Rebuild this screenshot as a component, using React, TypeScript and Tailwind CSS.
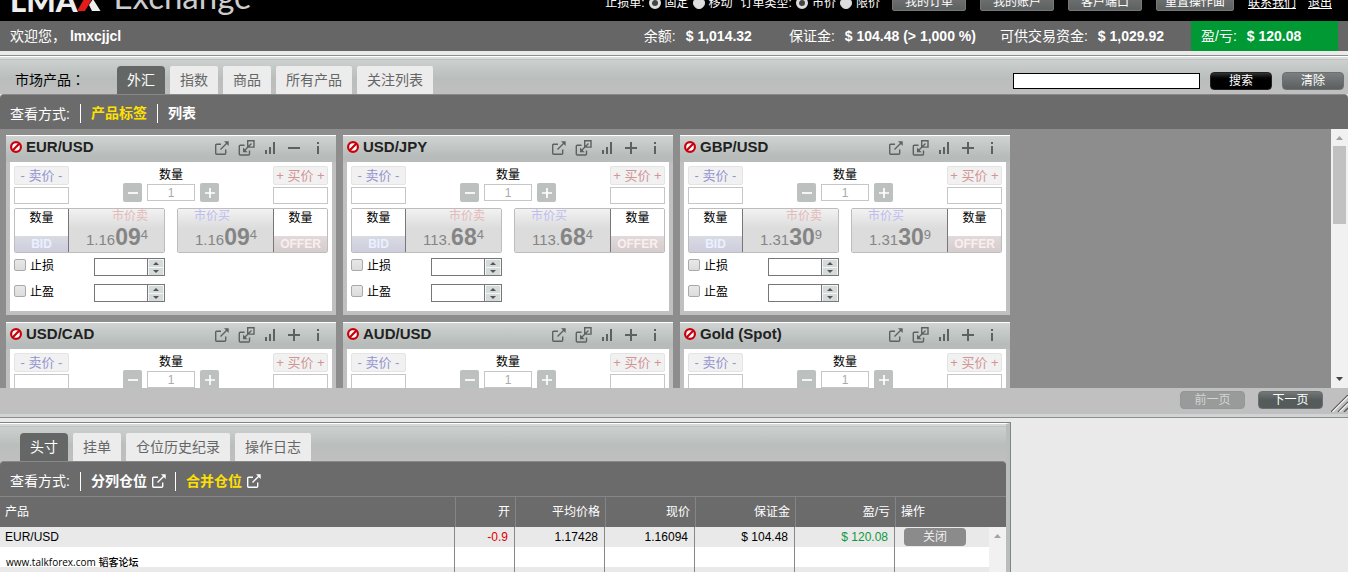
import React from "react";

type Instrument = { name: string; price?: string[]; open?: boolean };

const instruments: Instrument[] = [
  { name: "EUR/USD", price: ["1.16", "09", "4"], open: true },
  { name: "USD/JPY", price: ["113.", "68", "4"] },
  { name: "GBP/USD", price: ["1.31", "30", "9"] },
  { name: "USD/CAD" },
  { name: "AUD/USD" },
  { name: "Gold (Spot)" },
];

function PopOut({ className = "" }: { className?: string }) {
  return (
    <svg viewBox="0 0 14 14" className={`size-3.5 shrink-0 ${className}`} fill="none" stroke="currentColor" strokeWidth="1.4" aria-hidden="true">
      <path d="M6 3.200H1.600a.9.9 0 0 0-.9.9v8.200a.9.9 0 0 0 .9.9h8.200a.9.9 0 0 0 .9-.9V8.500M5.500 8.500l7-7" />
      <path d="M9 .3h4.700V5z" fill="currentColor" stroke="none" />
    </svg>
  );
}

function PopIn() {
  return (
    <svg viewBox="0 0 17 16" className="h-4 w-[17px]" fill="none" stroke="currentColor" strokeWidth="1.4" aria-hidden="true">
      <path d="M6.500 5.200H2.300a1 1 0 0 0-1 1v7.800a1 1 0 0 0 1 1h8.200a1 1 0 0 0 1-1v-3.500" />
      <path d="M9.700 .8h6.300v6.300H9.700zM13.500 3.500L6.500 10.500" />
      <path d="M5 7.500v4.700h4.700z" fill="currentColor" stroke="none" />
    </svg>
  );
}

function Bars() {
  return (
    <svg viewBox="0 0 11 12" className="h-3 w-[11px]" fill="currentColor" aria-hidden="true">
      <path d="M0 8h2v4H0zM4 5h2v7H4zM8 0h2v12H8z" />
    </svg>
  );
}

function Plus({ minus = false, small = false }: { minus?: boolean; small?: boolean }) {
  return (
    <svg viewBox="0 0 12 12" className={small ? "size-2.5" : "size-3"} stroke="currentColor" strokeWidth="2" aria-hidden="true">
      <path d={minus ? "M0 6h12" : "M0 6h12M6 0v12"} />
    </svg>
  );
}

function IconButton({ label, children }: { label: string; children: React.ReactNode }) {
  return (
    <button type="button" aria-label={label} className="flex h-5 w-6 items-center justify-center text-[#5d615f]">
      {children}
    </button>
  );
}

function QuantityCell({ side }: { side: "BID" | "OFFER" }) {
  return (
    <div className="flex w-[53px] flex-col text-center">
      <span className="flex-1 bg-white text-xs leading-[18px]">数量</span>
      <span className={side === "BID"
        ? "h-4 bg-linear-to-b from-[#d9dbe3] to-[#cdcddd] text-xs leading-[17px] font-bold text-[#eaf1ff]"
        : "h-4 bg-linear-to-b from-[#e0dada] to-[#d6cdcd] text-xs leading-[17px] font-bold text-[#fdeeee]"}>
        {side}
      </span>
    </div>
  );
}

function Quote({ price, side }: { price: string[]; side: "BID" | "OFFER" }) {
  const bid = side === "BID";
  return (
    <div className={bid
      ? "flex h-[45px] w-[151px] overflow-hidden rounded-xs border border-[#bdbdbd]"
      : "flex h-[45px] w-[151px] flex-row-reverse overflow-hidden rounded-xs border border-[#bdbdbd]"}>
      <QuantityCell side={side} />
      <button type="button" className={bid
        ? "flex flex-1 flex-col border-l border-[#777] bg-linear-to-b from-[#f2f2f2] to-[#dcdcdc] to-45% text-left"
        : "flex flex-1 flex-col border-r border-[#777] bg-linear-to-b from-[#f2f2f2] to-[#dcdcdc] to-45% text-left"}>
        <span className={bid
          ? "w-full pr-4 text-right text-xs leading-[14px] text-[#e3b9b9]"
          : "w-full pl-4 text-xs leading-[14px] text-[#bcbcf0]"}>
          {bid ? "市价卖" : "市价买"}
        </span>
        <span className="flex h-7 w-full items-baseline pl-[17px] leading-7 text-[#858585]">
          <span className="text-[15px]">{price[0]}</span>
          <span className="text-[23px] leading-7 font-bold">{price[1]}</span>
          <span className="self-start text-[13px] leading-6">{price[2]}</span>
        </span>
      </button>
    </div>
  );
}

function StopRow({ id, label }: { id: string; label: string }) {
  return (
    <div className="flex h-[18px] items-start">
      <input id={id} type="checkbox" className="mt-px size-3 appearance-none rounded-xs border border-[#a9a9a9] bg-linear-to-b from-[#e8e8e8] to-[#dcdcdc]" />
      <label htmlFor={id} className="w-[68px] pl-1 text-xs leading-4">{label}</label>
      <div className="flex h-[18px] w-[71px] border border-[#777]">
        <input aria-label={`${label}距离`} className="min-w-0 flex-1 bg-white px-1 text-xs outline-none" />
        <div className="flex w-[17px] flex-col justify-center gap-px border-l border-[#777] bg-[#f4f5f5] px-px text-[#555]">
          <button type="button" aria-label="增加" className="flex h-[7px] items-center justify-center bg-[#d5dada]">
            <svg viewBox="0 0 6 3" className="h-[3px] w-1.5" fill="currentColor"><path d="M3 0l3 3H0z" /></svg>
          </button>
          <button type="button" aria-label="减少" className="flex h-[7px] items-center justify-center bg-[#d5dada]">
            <svg viewBox="0 0 6 3" className="h-[3px] w-1.5" fill="currentColor"><path d="M0 0h6L3 3z" /></svg>
          </button>
        </div>
      </div>
    </div>
  );
}

function SideOrder({ sell = false }: { sell?: boolean }) {
  return (
    <div className="flex w-[55px] flex-col gap-0.5">
      <button type="button" className={sell
        ? "h-[19px] rounded-xs border border-[#e4e4e4] bg-[#f1f1f1] text-[13px] leading-[17px] whitespace-nowrap text-[#9494cf]"
        : "h-[19px] rounded-xs border border-[#e4e4e4] bg-[#f1f1f1] text-[13px] leading-[17px] whitespace-nowrap text-[#d29494]"}>
        {sell ? "- 卖价 -" : "+ 买价 +"}
      </button>
      <input aria-label={sell ? "卖价" : "买价"} className="h-[17px] w-full border border-[#c6c6c6] bg-white px-1 text-xs" />
    </div>
  );
}

function Card({ item }: { item: Instrument }) {
  return (
    <section className="w-[330px] bg-[#c0c0c0] px-1 pb-1">
      <header className="-mx-1 flex h-[27px] items-center border-t border-white bg-linear-to-b from-[#cfd4d2] to-[#b7bcba] to-80% pl-1">
        <svg viewBox="0 0 12 12" className="mb-1 size-3" fill="#fff" stroke="#c9000c" strokeWidth="2.200" aria-hidden="true">
          <circle cx="6" cy="6" r="4.900" />
          <path d="M2.800 9.200l6.400-6.400" />
        </svg>
        <h2 className="mb-1 flex-1 pl-1 text-[15px] leading-5 font-bold text-[#222]">{item.name}</h2>
        <div className="flex pr-1.5 pb-0.5">
          <IconButton label="弹出"><PopOut /></IconButton>
          <IconButton label="弹入"><PopIn /></IconButton>
          <IconButton label="图表"><Bars /></IconButton>
          <IconButton label={item.open ? "收起" : "展开"}><Plus minus={item.open} /></IconButton>
          <IconButton label="信息">
            <svg viewBox="0 0 2 12" className="h-3 w-0.5" fill="currentColor"><path d="M0 0h2v2H0zM0 4h2v8H0z" /></svg>
          </IconButton>
        </div>
      </header>
      <div className="flex h-[149px] flex-col bg-white p-1">
        <div className="flex h-[38px] justify-between">
          <SideOrder sell />
          <div className="flex flex-col items-center">
            <label htmlFor={`qty-${item.name}`} className="h-[17px] text-xs leading-[18px]">数量</label>
            <div className="flex h-[19px] items-center gap-[5px]">
              <button type="button" aria-label="减少数量" className="flex size-[19px] items-center justify-center rounded-xs bg-[#bcc0bf] text-white"><Plus minus small /></button>
              <input id={`qty-${item.name}`} defaultValue="1" className="h-[17px] w-12 border border-[#c6c6c6] bg-white text-center text-xs leading-[15px] text-[#aaa]" />
              <button type="button" aria-label="增加数量" className="flex size-[19px] items-center justify-center rounded-xs bg-[#bcc0bf] text-white"><Plus small /></button>
            </div>
          </div>
          <SideOrder />
        </div>
        {item.price && (
          <>
            <div className="mt-1 flex justify-between">
              <Quote price={item.price} side="BID" />
              <Quote price={item.price} side="OFFER" />
            </div>
            <div className="mt-[5px] flex flex-col gap-2">
              <StopRow id={`sl-${item.name}`} label="止损" />
              <StopRow id={`tp-${item.name}`} label="止盈" />
            </div>
          </>
        )}
      </div>
    </section>
  );
}

function Tabs({ items }: { items: string[] }) {
  return (
    <nav className="flex gap-[5px]">
      {items.map((t, i) => (
        <button key={t} type="button" className={i === 0
          ? "h-7 rounded-t-sm bg-[#646765] px-2.5 text-sm text-white"
          : "h-7 rounded-t-xs bg-[#ececec] px-2.5 text-sm text-[#666]"}>
          {t}
        </button>
      ))}
    </nav>
  );
}

function Radio({ name, label, checked = false }: { name: string; label: string; checked?: boolean }) {
  return (
    <label className="flex items-center gap-1">
      <input type="radio" name={name} defaultChecked={checked} className="size-3 appearance-none rounded-full border border-[#ddd] bg-[#ddd] checked:border-[3px] checked:bg-[#444]" />
      {label}
    </label>
  );
}

const topButtons = [
  { label: "我的订单", style: "w-[74px]" },
  { label: "我的账户", style: "w-[74px]" },
  { label: "客户端口", style: "w-[74px]" },
  { label: "重置操作面", style: "w-[78px]" },
];

function Balance({ label, value }: { label: string; value: string }) {
  return (
    <span className="flex gap-2.5 whitespace-nowrap">
      <span>{label}:</span>
      <b>{value}</b>
    </span>
  );
}

function TopBar() {
  return (
    <header className="flex h-[21px] items-end justify-between overflow-hidden bg-black pr-4 pl-2.5 text-white">
      <div className="flex items-end pb-1.5 whitespace-nowrap">
        <span className="font-[Lato,sans-serif] text-[31px] leading-[30px] font-black text-[#eee]">LMA</span>
        <svg viewBox="0 0 24 22" className="mb-1 h-[22px] w-6" aria-hidden="true">
          <path d="M0 22L13 0h8L8 22z" fill="#e31b1b" />
          <path d="M12 16l4-6 7.500 12H15z" fill="#eee" />
        </svg>
        <span className="mb-1 pl-3 font-[Lato,sans-serif] text-[33px] leading-[30px] text-[#ccc]">Exchange</span>
      </div>
      <div className="flex items-end pb-2.5 text-xs leading-4 whitespace-nowrap">
        <div className="mr-3 flex items-center gap-1">
          <span>止损单:</span>
          <Radio name="stop" label="固定" checked />
          <Radio name="stop" label="移动" />
          <span className="pl-1">订单类型:</span>
          <Radio name="type" label="市价" checked />
          <Radio name="type" label="限价" />
        </div>
        <div className="flex gap-3.5">
          {topButtons.map((b) => (
            <button key={b.label} type="button" className={`h-[19px] rounded-xs border border-[#777] bg-linear-to-b from-[#777] to-[#5d6161] leading-4 ${b.style}`}>{b.label}</button>
          ))}
        </div>
        <a href="#contact" className="ml-3.5 underline">联系我们</a>
        <a href="#logout" className="ml-3 underline">退出</a>
      </div>
    </header>
  );
}

const pill = "h-[18px] rounded-sm border text-xs leading-4";

export default function App() {
  return (
    <div className="min-h-screen overflow-hidden bg-[#eaeaea] font-['Liberation_Sans','Noto_Sans_CJK_SC',sans-serif] text-black">
      <TopBar />
      <div className="flex h-[30px] items-center justify-between bg-[#666] px-2.5 text-sm text-white">
        <span>欢迎您， <b>lmxcjjcl</b></span>
        <div className="flex h-full items-center">
          <Balance label="余额" value="$ 1,014.32" />
          <span className="w-[37px]" />
          <Balance label="保证金" value="$ 104.48 (> 1,000 %)" />
          <span className="w-6" />
          <Balance label="可供交易资金" value="$ 1,029.92" />
          <div className="ml-[27px] flex h-full w-[147px] items-center bg-[#009933] pl-2.5">
            <Balance label="盈/亏" value="$ 120.08" />
          </div>
        </div>
      </div>

      <main className="mt-1 border-y border-[#8c8f8f]">
        <div className="border-t border-white bg-[#c0bfbf]">
          <div className="h-[3px] border-b border-[#bfc3c1] bg-[#d8dcdb]" />
          <div className="flex h-[34px] items-end bg-linear-to-b from-[#ccd1cf] via-[#b9bebc] via-55% to-[#c0bfbf] pr-1">
            <h1 className="w-[117px] pb-1 pl-[15px] text-sm leading-5">市场产品<span className="font-['Noto_Sans_CJK_TC',sans-serif] leading-none" lang="zh-Hant">：</span></h1>
            <Tabs items={["外汇", "指数", "商品", "所有产品", "关注列表"]} />
            <form className="mb-1 ml-auto flex items-center gap-2.5" onSubmit={(e) => e.preventDefault()}>
              <input aria-label="搜索产品" className="h-4 w-[187px] border border-black bg-white px-1 text-xs" />
              <button type="submit" className={`${pill} w-[62px] border-[#222] bg-linear-to-b from-[#333] to-black to-50% text-white`}>搜索</button>
              <button type="reset" className={`${pill} w-[62px] border-[#6c7070] bg-linear-to-b from-[#7b7f7f] to-[#5b5f5f] text-white`}>清除</button>
            </form>
          </div>
        </div>
        <div className="flex h-[35px] items-center rounded-t border-t border-[#888] bg-[#6b6b6b] pt-[3px] pl-2.5 text-sm text-white">
          <span>查看方式:</span>
          <button type="button" className="ml-2.5 h-[19px] border-l border-white px-2.5 leading-[19px] font-bold text-[#ffe000]">产品标签</button>
          <button type="button" className="h-[19px] border-l border-white px-2.5 leading-[19px] font-bold">列表</button>
        </div>
        <div className="flex h-[259px] overflow-hidden bg-[#8d8d8d]">
          <div className="flex flex-1 flex-wrap content-start gap-[7px] pt-1.5 pl-1.5">
            {instruments.map((item) => <Card key={item.name} item={item} />)}
          </div>
          <div className="flex w-[17px] flex-col items-center justify-between bg-[#f1f1f1] py-[7px]">
            <div className="flex flex-col items-center gap-1.5">
              <svg viewBox="0 0 7 4" className="h-1 w-[7px]" fill="#a3a3a3"><path d="M3.500 0L7 4H0z" /></svg>
              <div className="h-[78px] w-[13px] bg-[#c1c1c1]" />
            </div>
            <svg viewBox="0 0 7 4" className="h-1 w-[7px]" fill="#444"><path d="M0 0h7L3.500 4z" /></svg>
          </div>
        </div>
        <div className="flex h-[29px] items-start justify-end border-b-[3px] border-[#d0d4d4] bg-[#c0c0c0] pt-[3px]">
          <button type="button" disabled className={`${pill} w-[65px] border-[#949797] bg-[#989b9a] text-[#d4d4d4]`}>前一页</button>
          <button type="button" className={`${pill} ml-[13px] w-[65px] border-[#6c7070] bg-linear-to-b from-[#727777] to-[#555b5b] to-50% text-white`}>下一页</button>
          <svg viewBox="0 0 17 17" className="mt-1 ml-2 h-[17px] w-[17px]" fill="none" strokeWidth="1.300" aria-hidden="true">
            <path d="M0 17L17 0M7 17L17 7M13 17l4-4" stroke="#555" />
            <path d="M1.500 17L17 1.500M8.500 17L17 8.500" stroke="#eee" />
          </svg>
        </div>
      </main>

      <section className="mt-1 w-3/4 border-t border-r border-[#7d8585]">
        <div className="border-t border-r-4 border-t-white border-r-[#b9bebc] bg-[#c0bfbf]">
          <div className="h-[3px] border-b border-[#bfc3c1] bg-[#d4d8d7]" />
          <div className="flex h-[34px] items-end bg-linear-to-b from-[#ccd1cf] via-[#b9bebc] via-55% to-[#c0bfbf] pl-5">
            <Tabs items={["头寸", "挂单", "仓位历史纪录", "操作日志"]} />
          </div>
          <div className="flex h-[35px] items-center rounded-t border-t border-[#888] bg-[#6b6b6b] pt-1 pl-2.5 text-sm text-white">
            <span>查看方式:</span>
            <button type="button" className="ml-2.5 flex h-[19px] items-center gap-[5px] border-l border-white pr-[9px] pl-2.5 leading-[19px] font-bold">分列仓位<PopOut /></button>
            <button type="button" className="flex h-[19px] items-center gap-[5px] border-l border-white pr-[9px] pl-2.5 leading-[19px] font-bold text-[#ffe000]">合并仓位<PopOut className="text-white" /></button>
          </div>
          <div className="relative">
            <table className="w-full table-fixed border-separate border-spacing-0 text-right text-xs">
              <colgroup>
                <col />
                <col className="w-[60px]" />
                <col className="w-[90px]" />
                <col className="w-[90px]" />
                <col className="w-[100px]" />
                <col className="w-[100px]" />
                <col className="w-[111px]" />
              </colgroup>
              <thead>
                <tr className="h-[31px] bg-[#6b6b6b] text-white">
                  {["产品", "开", "平均价格", "现价", "保证金", "盈/亏", "操作"].map((h, i) => (
                    <th key={h} scope="col" className={i === 0
                      ? "border-t border-[#858585] p-0 pl-[5px] text-left font-normal"
                      : i === 6
                        ? "border-t border-l border-[#858585] p-0 pl-[5px] text-left font-normal"
                        : "border-t border-l border-[#858585] p-0 pr-[5px] font-normal"}>{h}</th>
                  ))}
                </tr>
              </thead>
              <tbody>
                <tr className="h-5 bg-[#e9e9e9]">
                  <td className="border-r border-[#888] p-0 pl-[5px] text-left">EUR/USD</td>
                  <td className="border-r border-[#888] p-0 pr-1.5 text-[#e00000]">-0.9</td>
                  <td className="border-r border-[#888] p-0 pr-1.5">1.17428</td>
                  <td className="border-r border-[#888] p-0 pr-1.5">1.16094</td>
                  <td className="border-r border-[#888] p-0 pr-1.5">$ 104.48</td>
                  <td className="border-r border-[#888] p-0 pr-1.5 text-[#0d9a3c]">$ 120.08</td>
                  <td className="p-0 pl-[9px] text-left">
                    <button type="button" className="block h-[18px] w-[62px] rounded-sm bg-[#8b8b8b] text-center leading-[18px] text-[#eee]">关闭</button>
                  </td>
                </tr>
                {["bg-white", "bg-[#e9e9e9]"].map((bg) => (
                  <tr key={bg} className={`h-5 ${bg}`}>
                    {[0, 1, 2, 3, 4, 5].map((c) => <td key={c} className="border-r border-[#888]" />)}
                    <td />
                  </tr>
                ))}
              </tbody>
            </table>
            <div className="absolute top-[31px] right-0 bottom-0 flex w-[17px] justify-center bg-[#f1f1f1] pt-[7px]">
              <svg viewBox="0 0 7 4" className="h-1 w-[7px]" fill="#a3a3a3"><path d="M3.500 0L7 4H0z" /></svg>
            </div>
            <p className="absolute top-[57px] left-1.5 font-['Open_Sans','Noto_Sans_CJK_SC',sans-serif] text-[10px] leading-[18px] font-medium">www.talkforex.com 韬客论坛</p>
          </div>
        </div>
      </section>
    </div>
  );
}
